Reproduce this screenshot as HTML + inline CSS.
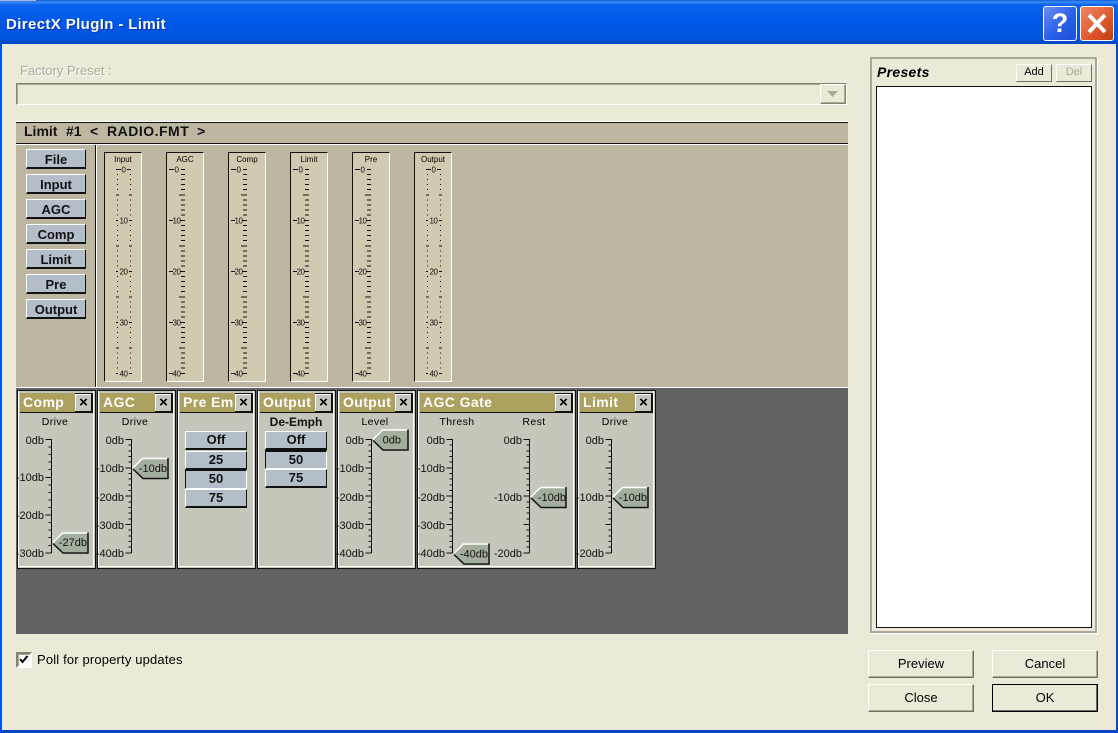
<!DOCTYPE html>
<html><head><meta charset="utf-8"><title>DirectX PlugIn - Limit</title>
<style>
html,body{margin:0;padding:0;width:1118px;height:733px;overflow:hidden;background:#ECE9D8;font-family:"Liberation Sans",sans-serif;color:#000}
div{position:absolute;box-sizing:border-box;white-space:nowrap}
.nb{left:26px;width:60px;height:20px;background:#B4BEC9;border:1px solid;border-color:#fff #111 #111 #fff;border-bottom-width:2px;font:bold 13px/19px "Liberation Sans",sans-serif;text-align:center;color:#111}
.m{top:152px;width:38px;height:230px;background:#CFCAB0;border:1px solid;border-color:#111 #fff #fff #111}
.m b{position:absolute;top:2px;left:0;right:0;text-align:center;font:normal 8px/10px "Liberation Sans",sans-serif}
.p{top:390px;height:179px;width:79px;background:#C5C7BA;border:1px solid #111;box-shadow:inset -1px -1px 0 #C5C7BA,inset -2px -2px 0 #fff,inset 1px 0 0 #fff}
.p .t{left:2px;top:2px;height:20px;right:2px;background:#ADA15F;border-bottom:1px solid #111;color:#fff;font:bold 14px/18px "Liberation Sans",sans-serif;letter-spacing:.4px;padding-left:3px;overflow:hidden;border-right:18px solid #111}
.p .x{top:3px;right:4px;width:16px;height:17px;background:#C5C7BA;border-top:1px solid #fff;border-left:1px solid #fff;font:bold 15px/15px "Liberation Sans",sans-serif;text-align:center;color:#000}
.sb{height:19px;width:62px;background:#B4BEC9;border:1px solid;border-color:#fff #111 #111 #fff;border-bottom-width:2px;font:bold 13px/16px "Liberation Sans",sans-serif;text-align:center;color:#111}
.sb.on{border-color:#111 #fff #fff #111;border-width:2px 1px 1px 1px}
.btn{width:106px;height:28px;background:#ECE9D8;border:1px solid;border-color:#fff #716F64 #716F64 #fff;box-shadow:inset -1px -1px 0 #ACA899;font:13px/26px "Liberation Sans",sans-serif;text-align:center}
.lab{font:10.5px/12px "Liberation Sans",sans-serif;letter-spacing:.4px;text-align:center;top:416px}
.hd{top:121px;font:bold 14px/20px "Liberation Sans",sans-serif;color:#111}
svg{position:absolute;left:0;top:0;font-family:"Liberation Sans",sans-serif}
</style></head><body>

<!-- window frame -->
<div style="left:0;top:0;width:1118px;height:44px;background:linear-gradient(#0A5BDD 0,#3A8CF4 2px,#0A62F0 5px,#0058E8 22px,#0054E0 38px,#0049C4 43px)"></div>
<div style="left:0;top:0;width:36px;height:1px;background:#A9B4E0"></div>
<div style="left:0;top:44px;width:2px;height:689px;background:#0055E5"></div>
<div style="left:1116px;top:44px;width:2px;height:689px;background:#0048D0"></div>
<div style="left:0;top:730px;width:1118px;height:3px;background:#0A45C8"></div>
<div style="left:6px;top:16px;color:#fff;font:bold 15px/18px 'Liberation Sans',sans-serif;letter-spacing:.38px;text-shadow:1px 1px 0 #0A2FA0">DirectX PlugIn - Limit</div>

<div style="left:1043px;top:6px;width:34px;height:35px;border:1px solid #fff;border-radius:3px;background:linear-gradient(135deg,#6C8CF0,#2A5FE8 55%,#1E4FD8);color:#fff;font:bold 27px/33px 'Liberation Sans',sans-serif;text-align:center">?</div>
<div style="left:1080px;top:6px;width:34px;height:35px;border:1px solid #fff;border-radius:3px;background:linear-gradient(135deg,#EE8A68,#E05A30 55%,#C23A10)"></div>

<!-- factory preset -->
<div style="left:20px;top:63px;font:13px/15px 'Liberation Sans',sans-serif;color:#ACA899;text-shadow:1px 1px 0 #fff">Factory Preset :</div>
<div style="left:16px;top:83px;width:831px;height:22px;background:#ECE9D8;border:1px solid;border-color:#85836F #fff #fff #85836F;box-shadow:inset 1px 1px 0 #ACA899"></div>
<div style="left:820px;top:84px;width:26px;height:20px;background:#ECE9D8;border:1px solid;border-color:#fff #85836F #85836F #fff;box-shadow:inset -1px -1px 0 #ACA899"></div>

<!-- limit panel -->
<div style="left:16px;top:121px;width:832px;height:267px;background:#BDB6A0;border-top:1px solid #fff"></div>
<div style="left:16px;top:122px;width:832px;height:1px;background:#111"></div>
<div style="left:16px;top:143px;width:832px;height:1px;background:#111"></div>
<div style="left:16px;top:144px;width:832px;height:1px;background:#fff"></div>
<div class="hd" style="left:24px">Limit</div>
<div class="hd" style="left:66px">#1</div>
<div class="hd" style="left:90px">&lt;</div>
<div class="hd" style="left:107px;letter-spacing:.5px">RADIO.FMT</div>
<div class="hd" style="left:197px">&gt;</div>
<div style="left:95px;top:145px;width:1px;height:242px;background:#111"></div>
<div style="left:96px;top:145px;width:1px;height:242px;background:#fff"></div>

<div class="nb" style="top:149px">File</div>
<div class="nb" style="top:174px">Input</div>
<div class="nb" style="top:199px">AGC</div>
<div class="nb" style="top:224px">Comp</div>
<div class="nb" style="top:249px">Limit</div>
<div class="nb" style="top:274px">Pre</div>
<div class="nb" style="top:299px">Output</div>

<div class="m" style="left:104px"><b>Input</b></div>
<div class="m" style="left:166px"><b>AGC</b></div>
<div class="m" style="left:228px"><b>Comp</b></div>
<div class="m" style="left:290px"><b>Limit</b></div>
<div class="m" style="left:352px"><b>Pre</b></div>
<div class="m" style="left:414px"><b>Output</b></div>

<!-- lower panel -->
<div style="left:16px;top:387px;width:832px;height:247px;background:#626262;border-top:1px solid #fff"></div>

<div class="p" style="left:17px"><div class="t">Comp</div><div class="x">×</div></div>
<div class="p" style="left:97px"><div class="t">AGC</div><div class="x">×</div></div>
<div class="p" style="left:177px"><div class="t">Pre Em</div><div class="x">×</div></div>
<div class="p" style="left:257px"><div class="t">Output</div><div class="x">×</div></div>
<div class="p" style="left:337px"><div class="t">Output</div><div class="x">×</div></div>
<div class="p" style="left:417px;width:159px"><div class="t">AGC Gate</div><div class="x">×</div></div>
<div class="p" style="left:577px"><div class="t">Limit</div><div class="x">×</div></div>

<div class="lab" style="left:25px;width:60px">Drive</div>
<div class="lab" style="left:105px;width:60px">Drive</div>
<div class="lab" style="left:345px;width:60px">Level</div>
<div class="lab" style="left:427px;width:60px">Thresh</div>
<div class="lab" style="left:504px;width:60px">Rest</div>
<div class="lab" style="left:585px;width:60px">Drive</div>
<div style="left:265px;width:62px;top:415px;text-align:center;font:bold 12px/14px 'Liberation Sans',sans-serif;color:#111">De-Emph</div>

<div class="sb" style="left:185px;top:431px">Off</div>
<div class="sb" style="left:185px;top:451px">25</div>
<div class="sb on" style="left:185px;top:469px;height:20px">50</div>
<div class="sb" style="left:185px;top:489px">75</div>

<div class="sb" style="left:265px;top:431px">Off</div>
<div class="sb on" style="left:265px;top:450px">50</div>
<div class="sb" style="left:265px;top:469px">75</div>

<!-- presets -->
<div style="left:870px;top:57px;width:227px;height:576px;border:2px solid #ACA899;box-shadow:1px 1px 0 #fff"></div>
<div style="left:877px;top:64px;font:italic bold 14px/17px 'Liberation Sans',sans-serif;letter-spacing:.3px">Presets</div>
<div style="left:1016px;top:64px;width:36px;height:18px;background:#ECE9D8;border:1px solid;border-color:#fff #716F64 #716F64 #fff;font:11px/15px 'Liberation Sans',sans-serif;text-align:center">Add</div>
<div style="left:1056px;top:64px;width:36px;height:18px;background:#ECE9D8;border:1px solid;border-color:#fff #716F64 #716F64 #fff;font:11px/15px 'Liberation Sans',sans-serif;text-align:center;color:#ACA899">Del</div>
<div style="left:876px;top:86px;width:216px;height:542px;background:#fff;border:1px solid #111"></div>

<!-- dialog buttons -->
<div class="btn" style="left:868px;top:650px">Preview</div>
<div class="btn" style="left:992px;top:650px">Cancel</div>
<div class="btn" style="left:868px;top:684px">Close</div>
<div class="btn" style="left:992px;top:684px;border:1px solid #000;box-shadow:inset -1px -1px 0 #716F64;">OK</div>

<!-- checkbox -->
<div style="left:16px;top:652px;width:16px;height:16px;background:#fff;border:2px solid;border-color:#85836F #fff #fff #85836F;box-shadow:inset 1px 1px 0 #ACA899"></div>
<div style="left:37px;top:652px;font:13px/15px 'Liberation Sans',sans-serif;letter-spacing:.16px">Poll for property updates</div>

<svg width="1118" height="733" viewBox="0 0 1118 733">
<defs>
<path id="mt" d="M0 5h4M0 10h4M0 15h4M0 20h4"/>
<g id="tickcol" stroke="#111" fill="none">
<use href="#mt" y="0"/><use href="#mt" y="25.5"/><use href="#mt" y="51"/><use href="#mt" y="76.5"/><use href="#mt" y="102"/><use href="#mt" y="127.5"/><use href="#mt" y="153"/><use href="#mt" y="178.5"/>
<path d="M-2 25.5h6M-2 76.5h6M-2 127.5h6M-2 178.5h6"/>
</g>
<path id="dt" d="M0 5h1M0 10h1M0 15h1M0 20h1"/>
<g id="dotcol" stroke="#111" fill="none">
<use href="#dt" y="0"/><use href="#dt" y="25.5"/><use href="#dt" y="51"/><use href="#dt" y="76.5"/><use href="#dt" y="102"/><use href="#dt" y="127.5"/><use href="#dt" y="153"/><use href="#dt" y="178.5"/>
</g>
<g id="solid" font-size="8" text-anchor="middle" fill="#111" letter-spacing="-.5">
<g stroke="#111" fill="none" shape-rendering="crispEdges">
<use href="#tickcol" x="15"/>
<path d="M3 0h5M3 51h4M3 102h4M3 153h4M3 204h4M15 0h4M14 51h5M14 102h5M14 153h5M14 204h5"/>
</g>
<text x="10.500" y="3">0</text><text x="10.500" y="54">10</text><text x="10.500" y="105">20</text><text x="10.500" y="156">30</text><text x="10.500" y="207">40</text>
</g>
<g id="dotted" font-size="8" text-anchor="middle" fill="#111" letter-spacing="-.5">
<g shape-rendering="crispEdges"><use href="#dotcol" x="12"/><use href="#dotcol" x="25"/>
<g stroke="#111" fill="none">
<path d="M11 25.500h3M24 25.500h3M11 76.500h3M24 76.500h3M11 127.500h3M24 127.500h3M11 178.500h3M24 178.500h3M11 0h5M22 0h4M11 51h2M24 51h3M11 102h2M24 102h3M11 153h2M24 153h3M11 204h2M24 204h3"/>
</g></g>
<text x="18.500" y="3">0</text><text x="18.500" y="54">10</text><text x="18.500" y="105">20</text><text x="18.500" y="156">30</text><text x="18.500" y="207">40</text>
</g>
<path id="s40" stroke="#111" fill="none" d="M0 -.5V113.5M-6 0h6M-6 28.3h6M-6 56.6h6M-6 85h6M-6 113.3h6M-3 5.7h3M-3 11.3h3M-3 17h3M-3 22.6h3M-3 34h3M-3 39.6h3M-3 45.3h3M-3 51h3M-3 62.3h3M-3 68h3M-3 73.6h3M-3 79.3h3M-3 90.6h3M-3 96.3h3M-3 102h3M-3 107.6h3"/>
<path id="s30" stroke="#111" fill="none" d="M0 -.5V113.5M-6 0h6M-6 37.8h6M-6 75.5h6M-6 113.3h6M-3 7.5h3M-3 15h3M-3 22.6h3M-3 30.2h3M-3 45.3h3M-3 52.8h3M-3 60.4h3M-3 68h3M-3 83h3M-3 90.6h3M-3 98.2h3M-3 105.8h3"/>
<g id="h">
<path d="M0 0L9.500 -9.500H35V9.500H9.500Z" fill="#A4AE9D"/>
<path d="M0 0L9.500 -9.500H35" fill="none" stroke="#fff" stroke-width="1.500"/>
<path d="M35 -10V10.500H10L0 1" fill="none" stroke="#111" stroke-width="1.500"/>
</g>
</defs>

<path d="M1089 15l16 17M1105 15l-16 17" stroke="#fff" stroke-width="4" fill="none"/>
<path d="M827 91h11l-5.500 6z" fill="#ACA899"/>
<path d="M20 659l2.500 3 5-6" stroke="#000" stroke-width="2" fill="none"/>

<use href="#dotted" x="105" y="169.500"/>
<use href="#dotted" x="415" y="169.500"/>
<use href="#solid" x="166" y="169.500"/>
<use href="#solid" x="228" y="169.500"/>
<use href="#solid" x="290" y="169.500"/>
<use href="#solid" x="352" y="169.500"/>

<g shape-rendering="crispEdges">
<use href="#s30" x="51.500" y="439.500"/>
<use href="#s40" x="131.500" y="439.500"/>
<use href="#s40" x="371.500" y="439.500"/>
<use href="#s40" x="452.500" y="439.500"/>
<use href="#s40" x="529.500" y="439.500"/>
<use href="#s40" x="611.500" y="439.500"/>
</g>
<g font-size="11" text-anchor="end" fill="#111">
<text x="44" y="444">0db</text><text x="44" y="481">-10db</text><text x="44" y="519">-20db</text><text x="44" y="557">-30db</text>
<text x="124" y="444">0db</text><text x="124" y="472">-10db</text><text x="124" y="501">-20db</text><text x="124" y="529">-30db</text><text x="124" y="557">-40db</text>
<text x="364" y="444">0db</text><text x="364" y="472">-10db</text><text x="364" y="501">-20db</text><text x="364" y="529">-30db</text><text x="364" y="557">-40db</text>
<text x="445" y="444">0db</text><text x="445" y="472">-10db</text><text x="445" y="501">-20db</text><text x="445" y="529">-30db</text><text x="445" y="557">-40db</text>
<text x="522" y="444">0db</text><text x="522" y="501">-10db</text><text x="522" y="557">-20db</text>
<text x="604" y="444">0db</text><text x="604" y="501">-10db</text><text x="604" y="557">-20db</text>
</g>
<use href="#h" x="53" y="542.500"/>
<use href="#h" x="133" y="468"/>
<use href="#h" x="373" y="439.500"/>
<use href="#h" x="454" y="553.500"/>
<use href="#h" x="531" y="497"/>
<use href="#h" x="613" y="497"/>
<g font-size="11" text-anchor="end" fill="#111">
<text x="87" y="546">-27db</text>
<text x="167" y="472">-10db</text>
<text x="401" y="443.500">0db</text>
<text x="488" y="557.500">-40db</text>
<text x="566" y="501">-10db</text>
<text x="647" y="501">-10db</text>
</g>
</svg>
</body></html>
